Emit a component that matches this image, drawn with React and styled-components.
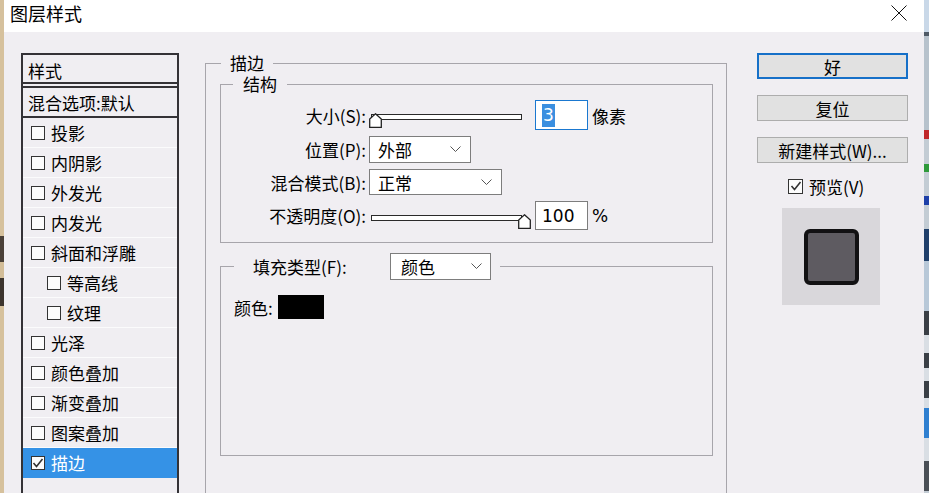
import React from 'react';
import styled, { createGlobalStyle } from 'styled-components';

const GlobalStyle = createGlobalStyle`
  html, body { margin: 0; padding: 0; }
  body {
    font-family: "Noto Sans CJK SC", "Noto Sans", sans-serif;
    background: #f0eef2;
    color: #000;
    overflow: hidden;
  }
  * { box-sizing: border-box; }
`;

const Screen = styled.div`
  width: 929px;
  height: 493px;
  display: flex;
  overflow: hidden;
`;

const EdgeStrip = styled.div`
  width: ${p => p.$w}px;
  flex-shrink: 0;
  display: flex;
  flex-direction: column;
  background: ${p => p.$bg};
`;

const EdgeSeg = styled.div`
  height: ${p => p.$h}px;
  background: ${p => p.$c};
  flex-shrink: 0;
`;

const Dialog = styled.div`
  flex: 1;
  min-width: 0;
  display: flex;
  flex-direction: column;
`;

const TitleBar = styled.div`
  height: 32px;
  flex-shrink: 0;
  background: #fff;
  display: flex;
  justify-content: space-between;
  align-items: flex-start;
  padding: 2px 17px 0 6px;
  font-size: 18px;
  line-height: 22px;
`;

const CloseIcon = styled.svg`
  margin-top: 3px;
`;

const Body = styled.div`
  flex: 1;
  display: flex;
  align-items: flex-start;
  padding: 21px 0 0 17px;
  background: #f0eef2;
  overflow: hidden;
  font-size: 17px;
`;

/* ---------- left list ---------- */
const StyleList = styled.div`
  width: 158px;
  height: 460px;
  flex-shrink: 0;
  border: 2px solid #343236;
  border-bottom: none;
  display: flex;
  flex-direction: column;
`;

const ListHeader = styled.div`
  height: 33px;
  padding: 3px 5px 0;
  display: flex;
  align-items: center;
  border-bottom: 6px double #343236;
  flex-shrink: 0;
`;

const BlendRow = styled.div`
  height: 30px;
  padding: 0 5px;
  display: flex;
  align-items: center;
  border-bottom: 2px solid #343236;
  flex-shrink: 0;
  white-space: nowrap;
`;

const ListItem = styled.div`
  height: 30px;
  flex-shrink: 0;
  display: flex;
  align-items: center;
  gap: 6px;
  padding-left: ${p => (p.$indent ? 24 : 8)}px;
  border-bottom: 1px solid ${p => (p.$active ? '#3592e6' : '#fbfbfc')};
  background: ${p => (p.$active ? '#3592e6' : 'transparent')};
  color: ${p => (p.$active ? '#fff' : '#000')};
  white-space: nowrap;
`;

const Box = styled.span`
  width: ${p => p.$size || 14}px;
  height: ${p => p.$size || 14}px;
  border: 1px solid #333;
  background: #fcfcfc;
  display: inline-flex;
  align-items: center;
  justify-content: center;
  flex-shrink: 0;
`;

/* ---------- main groups ---------- */
const Group = styled.fieldset`
  margin: ${p => p.$mt || 0}px 0 0;
  padding: ${p => p.$pad};
  border: 1px solid #a7a5ab;
  min-width: 0;
  width: ${p => (p.$w ? `${p.$w}px` : 'auto')};
  flex-shrink: 0;
`;

const Legend = styled.legend`
  margin-left: ${p => p.$ml}px;
  padding: 0 ${p => p.$pr}px 0 ${p => p.$pl}px;
  line-height: 20px;
`;

const LegendInner = styled.span`
  display: inline-flex;
  align-items: center;
  height: 27px;
`;

const LegendText = styled.span`
  width: 137px;
  white-space: nowrap;
`;

const MainCol = styled.div`
  margin-left: 26px;
  margin-top: 0;
  flex-shrink: 0;
`;

const Rows = styled.div`
  display: flex;
  flex-direction: column;
  gap: 6px;
`;

const FormRow = styled.div`
  display: flex;
  align-items: center;
  height: ${p => p.$h}px;
`;

const FieldLabel = styled.span`
  width: 145px;
  flex-shrink: 0;
  text-align: right;
  margin-right: 3px;
  white-space: nowrap;
`;

const Slider = styled.div`
  position: relative;
  width: 162px;
  height: 16px;
  margin-top: 12px;
  flex-shrink: 0;
`;

const Track = styled.div`
  position: absolute;
  left: 2px;
  top: 1px;
  width: 151px;
  height: 6px;
  border: 1px solid #2a2a2a;
  background: #fff;
`;

const Thumb = styled.svg`
  position: absolute;
  top: 0;
  left: ${p => p.$pos}px;
`;

const NumBox = styled.div`
  width: 53px;
  height: ${p => p.$h}px;
  margin-left: 4px;
  border: 1px solid ${p => (p.$focus ? '#1a78d0' : '#7d7d7d')};
  background: #fff;
  padding-left: 6px;
  display: flex;
  align-items: center;
  font-family: "DejaVu Sans", sans-serif;
  font-size: 17px;
  flex-shrink: 0;
`;

const Selected = styled.span`
  background: #3a8fe0;
  color: #fff;
  line-height: 23px;
  padding: 0 1px;
`;

const Unit = styled.span`
  margin-left: 4px;
  font-family: ${p => (p.$latin ? '"DejaVu Sans", sans-serif' : 'inherit')};
`;

const Select = styled.div`
  width: ${p => p.$w}px;
  height: ${p => p.$h}px;
  border: 1px solid #7d7d7d;
  background: #fff;
  display: flex;
  align-items: center;
  justify-content: space-between;
  padding: 0 ${p => p.$pr || 9}px 0 ${p => p.$pl || 8}px;
  flex-shrink: 0;
  white-space: nowrap;
`;

const ColorRow = styled.div`
  display: flex;
  align-items: center;
  height: 24px;
`;

const Swatch = styled.span`
  width: 46px;
  height: 24px;
  background: #000;
  margin-left: 5px;
`;

/* ---------- buttons column ---------- */
const SideCol = styled.div`
  margin-left: 30px;
  width: 151px;
  flex-shrink: 0;
  display: flex;
  flex-direction: column;
`;

const Button = styled.button`
  width: 151px;
  height: 26px;
  margin-top: ${p => p.$mt || 0}px;
  border: ${p => (p.$primary ? '2px solid #1670c8' : '1px solid #adadad')};
  background: #e1e1e1;
  font-family: inherit;
  font-size: 17px;
  line-height: 1;
  color: #000;
  padding: 0;
  white-space: nowrap;
  display: flex;
  align-items: center;
  justify-content: center;
`;

const PreviewCheck = styled.div`
  margin-top: 13px;
  margin-left: 31px;
  height: 20px;
  display: flex;
  align-items: center;
  gap: 6px;
`;

const PreviewBox = styled.div`
  margin-top: 12px;
  margin-left: 25px;
  width: 98px;
  height: 97px;
  background: #d9d7db;
  display: flex;
  align-items: center;
  justify-content: center;
`;

const PreviewShape = styled.div`
  width: 55px;
  height: 56px;
  border: 4px solid #121113;
  border-radius: 6px;
  background: #5e5b61;
`;

const Check = () => (
  <svg width="12" height="12" viewBox="0 0 12 12">
    <polyline points="1.5,6 4.5,9.5 10.5,2" fill="none" stroke="#333" strokeWidth="1.6" />
  </svg>
);

const Chevron = () => (
  <svg width="11" height="7" viewBox="0 0 11 7">
    <polyline points="0.5,0.5 5.5,5.5 10.5,0.5" fill="none" stroke="#555" strokeWidth="1" />
  </svg>
);

const SliderCtl = ({ value }) => (
  <Slider>
    <Track />
    <Thumb $pos={Math.round(value * 149)} width="13" height="15" viewBox="0 0 13 15">
      <polygon points="6.5,0.8 12.3,6 12.3,14.3 0.7,14.3 0.7,6" fill="#fff" stroke="#222" strokeWidth="1.3" />
    </Thumb>
  </Slider>
);

const items = [
  { t: '投影' },
  { t: '内阴影' },
  { t: '外发光' },
  { t: '内发光' },
  { t: '斜面和浮雕' },
  { t: '等高线', indent: true },
  { t: '纹理', indent: true },
  { t: '光泽' },
  { t: '颜色叠加' },
  { t: '渐变叠加' },
  { t: '图案叠加' },
  { t: '描边', active: true },
];

const leftSegs = [
  [236, '#d6c19d'], [26, '#4a4038'], [16, '#d3bd98'], [28, '#3c342e'], [187, '#d6c19d'],
];
const rightSegs = [
  [32, '#c9d8e8'], [4, '#4f5a66'], [94, '#b7c2cc'], [9, '#c0282b'], [25, '#c3ccd4'],
  [8, '#2e9a3a'], [24, '#c3ccd4'], [9, '#1d3fa8'], [24, '#c3ccd4'], [32, '#1f3f6a'],
  [50, '#b8c8d8'], [24, '#3a3f46'], [18, '#d9dee4'], [15, '#3a3f46'], [13, '#d9dee4'],
  [17, '#3a3f46'], [10, '#d9dee4'], [30, '#2f7fd0'], [23, '#d9dee4'], [30, '#4a4f56'],
];

export default function App() {
  return (
    <>
      <GlobalStyle />
      <Screen>
        <EdgeStrip $w={4} $bg="#d6c19d">
          {leftSegs.map(([h, c], i) => <EdgeSeg key={i} $h={h} $c={c} />)}
        </EdgeStrip>
        <Dialog>
          <TitleBar>
            <span>图层样式</span>
            <CloseIcon width="16" height="16" viewBox="0 0 16 16">
              <line x1="0.5" y1="0.5" x2="15.5" y2="15.5" stroke="#111" strokeWidth="1" />
              <line x1="15.5" y1="0.5" x2="0.5" y2="15.5" stroke="#111" strokeWidth="1" />
            </CloseIcon>
          </TitleBar>
          <Body>
            <StyleList>
              <ListHeader>样式</ListHeader>
              <BlendRow>混合选项:默认</BlendRow>
              {items.map(it => (
                <ListItem key={it.t} $indent={it.indent} $active={it.active}>
                  <Box>{it.active && <Check />}</Box>
                  <span>{it.t}</span>
                </ListItem>
              ))}
            </StyleList>

            <MainCol>
              <Group $w={522} $pad="0 13px 60px 14px">
                <Legend $ml={1} $pl={9} $pr={9}>描边</Legend>
                <Group $mt={1} $pad="6px 0 12px 0">
                  <Legend $ml={12} $pl={10} $pr={10}>结构</Legend>
                  <Rows>
                    <FormRow $h={30}>
                      <FieldLabel>大小(S):</FieldLabel>
                      <SliderCtl value={0} />
                      <NumBox $h={30} $focus><Selected>3</Selected></NumBox>
                      <Unit>像素</Unit>
                    </FormRow>
                    <FormRow $h={27}>
                      <FieldLabel>位置(P):</FieldLabel>
                      <Select $w={102} $h={27}><span>外部</span><Chevron /></Select>
                    </FormRow>
                    <FormRow $h={26}>
                      <FieldLabel>混合模式(B):</FieldLabel>
                      <Select $w={133} $h={26}><span>正常</span><Chevron /></Select>
                    </FormRow>
                    <FormRow $h={29}>
                      <FieldLabel>不透明度(O):</FieldLabel>
                      <SliderCtl value={1} />
                      <NumBox $h={29}>100</NumBox>
                      <Unit $latin>%</Unit>
                    </FormRow>
                  </Rows>
                </Group>
                <Group $mt={10} $pad="15px 0 136px 13px">
                  <Legend $ml={0} $pl={19} $pr={9}>
                    <LegendInner>
                      <LegendText>填充类型(F):</LegendText>
                      <Select $w={101} $h={27} $pl={10} $pr={8}><span>颜色</span><Chevron /></Select>
                    </LegendInner>
                  </Legend>
                  <ColorRow>
                    <span>颜色:</span>
                    <Swatch />
                  </ColorRow>
                </Group>
              </Group>
            </MainCol>

            <SideCol>
              <Button $primary>好</Button>
              <Button $mt={16}>复位</Button>
              <Button $mt={16}>新建样式(W)...</Button>
              <PreviewCheck>
                <Box $size={15}><Check /></Box>
                <span>预览(V)</span>
              </PreviewCheck>
              <PreviewBox>
                <PreviewShape />
              </PreviewBox>
            </SideCol>
          </Body>
        </Dialog>
        <EdgeStrip $w={5} $bg="#c3ccd4">
          {rightSegs.map(([h, c], i) => <EdgeSeg key={i} $h={h} $c={c} />)}
        </EdgeStrip>
      </Screen>
    </>
  );
}
